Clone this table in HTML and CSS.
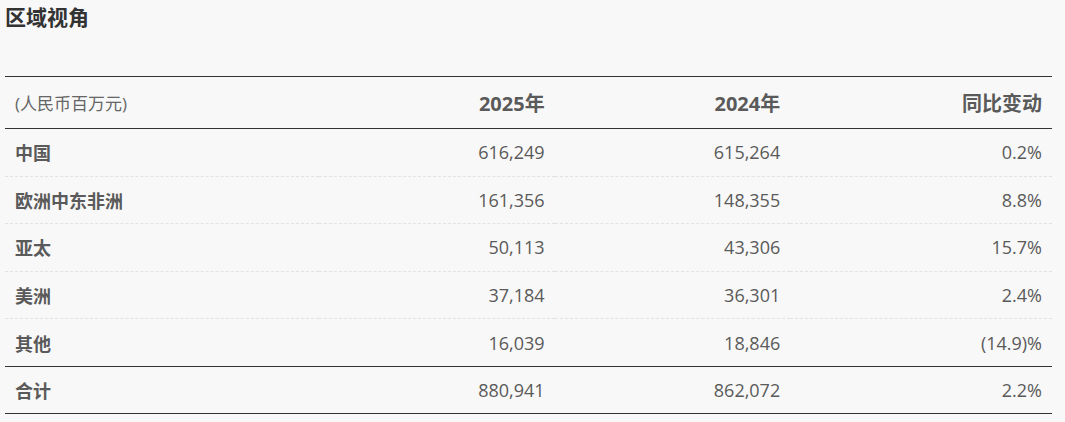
FILE: index.html
```html
<!DOCTYPE html>
<html lang="zh-CN">
<head>
<meta charset="utf-8">
<title>区域视角</title>
<link rel="stylesheet" href="styles.css">
</head>
<body>
<div class="page">
  <h2 class="title">区域视角</h2>
  <table class="region-table">
    <colgroup>
      <col class="c1"><col class="c2"><col class="c3"><col class="c4">
    </colgroup>
    <thead>
      <tr>
        <th class="unit">(人民币百万元)</th>
        <th class="num">2025年</th>
        <th class="num">2024年</th>
        <th class="num">同比变动</th>
      </tr>
    </thead>
    <tbody>
      <tr><td class="label">中国</td><td class="num">616,249</td><td class="num">615,264</td><td class="num">0.2%</td></tr>
      <tr><td class="label">欧洲中东非洲</td><td class="num">161,356</td><td class="num">148,355</td><td class="num">8.8%</td></tr>
      <tr><td class="label">亚太</td><td class="num">50,113</td><td class="num">43,306</td><td class="num">15.7%</td></tr>
      <tr><td class="label">美洲</td><td class="num">37,184</td><td class="num">36,301</td><td class="num">2.4%</td></tr>
      <tr><td class="label">其他</td><td class="num">16,039</td><td class="num">18,846</td><td class="num">(14.9)%</td></tr>
    </tbody>
    <tfoot>
      <tr><td class="label">合计</td><td class="num">880,941</td><td class="num">862,072</td><td class="num">2.2%</td></tr>
    </tfoot>
  </table>
</div>
</body>
</html>
```

FILE: styles.css
```css
html, body {
  margin: 0;
  padding: 0;
  background: #f8f8f8;
}
body {
  font-family: "Open Sans", "Noto Sans CJK SC", sans-serif;
  color: #5a5a5a;
}
.page {
  padding: 0 13px 0 5px;
}
.title {
  margin: 0;
  padding: 3px 0 0 0;
  height: 76px;
  box-sizing: border-box;
  font-size: 21px;
  line-height: 28px;
  font-weight: 700;
  color: #333;
}
.region-table {
  width: 100%;
  border-collapse: collapse;
  table-layout: fixed;
  border-top: 1px solid #333;
  border-bottom: 1px solid #333;
}
.c1 { width: 30%; }
.c2 { width: 22.5%; }
.c3 { width: 22.5%; }
.c4 { width: 25%; }
.region-table th,
.region-table td {
  padding: 0 10px;
  vertical-align: middle;
}
.region-table thead th {
  height: 51px;
  border-bottom: 1px solid #333;
  font-size: 20px;
  font-weight: 700;
  color: #5a5a5a;
}
.region-table thead th.unit {
  text-align: left;
  font-size: 17px;
  font-weight: 400;
  color: #666;
}
.region-table tbody td {
  height: 46.6px;
  border-bottom: 1px dashed #e2e2e2;
  font-size: 18px;
}
.region-table tbody tr:last-child td {
  border-bottom: 1px solid #333;
}
.region-table tfoot td {
  height: 46px;
  font-size: 18px;
}
.region-table .num {
  text-align: right;
}
.region-table .label {
  text-align: left;
  font-weight: 700;
  color: #5a5a5a;
}
```
